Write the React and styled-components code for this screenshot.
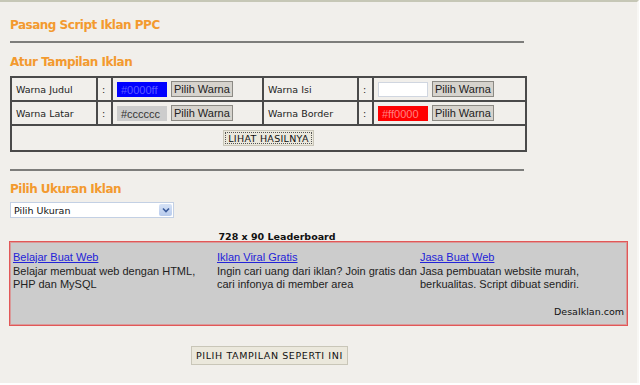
import React from 'react';
import styled, { createGlobalStyle } from 'styled-components';

const GlobalStyle = createGlobalStyle`
  body {
    margin: 0;
    background: #ffffff;
  }
`;

const Page = styled.div`
  width: 627px;
  height: 381px;
  padding: 0 0 0 10px;
  background-color: #f1efeb;
  border-top: 2px solid #c6c7b6;
  border-right: 2px solid #f8f7f4;
  font-family: "DejaVu Sans", Verdana, sans-serif;
  overflow: hidden;
`;

const Title = styled.div`
  font-family: "DejaVu Sans", Verdana, sans-serif;
  font-size: 12px;
  font-weight: bold;
  color: #f39a2f;
  letter-spacing: -0.5px;
  margin-top: 15px;
  height: 16px;
  line-height: 16px;
`;

const Heading = styled(Title)`
  margin-top: ${p => p.$top}px;
`;

const Rule = styled.div`
  width: 514px;
  height: 2px;
  background-color: #7d7d7b;
  margin-top: ${p => p.$top}px;
`;

const Table = styled.table`
  margin-top: 6px;
  width: 516px;
  border-collapse: collapse;
  border: 2px solid #3c3c3c;
  table-layout: fixed;
`;

const Cell = styled.td`
  box-sizing: border-box;
  border: 2px solid #4a4a4a;
  height: ${p => p.$h || 24}px;
  padding: 0 4px;
  font-family: "DejaVu Sans", Verdana, sans-serif;
  font-size: 9.5px;
  color: #222;
  width: ${p => p.$w}px;
  text-align: ${p => p.$center ? 'center' : 'left'};
  white-space: nowrap;
  overflow: hidden;
`;

const ColorBox = styled.span`
  display: inline-block;
  vertical-align: middle;
  width: 50px;
  height: 15px;
  line-height: 15px;
  box-sizing: border-box;
  padding-left: 3px;
  background-color: ${p => p.$bg};
  border: 1px solid ${p => p.$bg === '#ffffff' ? '#d0d6e0' : p.$bg};
  color: ${p => p.$fg};
  font-family: "Liberation Sans", Arial, sans-serif;
  font-size: 11px;
  margin-right: 4px;
`;

const ColorButton = styled.button`
  vertical-align: middle;
  height: 16px;
  padding: 0 2px;
  background-color: #d6d3cd;
  border: 1px solid #8c8a84;
  font-family: "Liberation Sans", Arial, sans-serif;
  font-size: 11px;
  color: #222;
  line-height: 13px;
`;

const PlainButton = styled.button`
  display: block;
  height: ${p => p.$h}px;
  padding: 0 4px;
  margin: ${p => p.$center ? '0 auto' : '0'};
  background-color: #ebe8dc;
  border: 1px solid #c9c6b8;
  outline: ${p => p.$dotted ? '1px dotted #555' : 'none'};
  outline-offset: -3px;
  font-family: "DejaVu Sans", Verdana, sans-serif;
  font-size: 9.5px;
  letter-spacing: ${p => p.$spacing}px;
  color: #111;
`;

const SelectWrap = styled.div`
  position: relative;
  margin-top: 5px;
  width: 164px;
  height: 16px;
`;

const Select = styled.select`
  appearance: none;
  display: block;
  width: 164px;
  height: 16px;
  box-sizing: border-box;
  border: 1px solid #c3d0e4;
  background: #ffffff;
  font-family: "DejaVu Sans", Verdana, sans-serif;
  font-size: 9.5px;
  color: #111;
  padding: 0 0 0 3px;
  outline: none;
`;

const Arrow = styled.span`
  position: absolute;
  right: 2px;
  top: 2px;
  width: 13px;
  height: 12px;
  background: linear-gradient(#d6e2f6, #b8cbed);
  border-radius: 2px;
  display: flex;
  align-items: center;
  justify-content: center;
  pointer-events: none;
`;

const SizeLabel = styled.div`
  width: 534px;
  margin-top: 14px;
  text-align: center;
  font-family: "DejaVu Sans", Verdana, sans-serif;
  font-weight: bold;
  font-size: 9.5px;
  color: #111;
  height: 9px;
  line-height: 9px;
`;

const AdBox = styled.div`
  margin-left: -1px;
  width: 611px;
  height: 79px;
  padding: 2px 3px;
  background-color: #cccccc;
  border: 1px solid #e25757;
  box-shadow: inset 0 0 0 1px #d99a9a;
  display: flex;
  flex-direction: column;
`;

const AdRow = styled.div`
  display: grid;
  grid-template-columns: 204px 203px 1fr;
  margin-top: 7px;
`;

const Ad = styled.div`
  font-family: "Liberation Sans", Arial, sans-serif;
  font-size: 11px;
  line-height: 13.5px;
  color: #222;
`;

const AdLink = styled.a`
  color: #2323d8;
  text-decoration: underline;
  display: block;
`;

const AdCredit = styled.div`
  margin-top: auto;
  text-align: right;
  font-family: "DejaVu Sans", Verdana, sans-serif;
  font-size: 9.5px;
  color: #111;
  padding-bottom: 6px;
`;

const Footer = styled.div`
  width: 516px;
  margin-top: 20px;
  padding-left: 181px;
`;

const ads = [
  { title: 'Belajar Buat Web', text: 'Belajar membuat web dengan HTML, PHP dan MySQL' },
  { title: 'Iklan Viral Gratis', text: 'Ingin cari uang dari iklan? Join gratis dan cari infonya di member area' },
  { title: 'Jasa Buat Web', text: 'Jasa pembuatan website murah, berkualitas. Script dibuat sendiri.' },
];

export default function App() {
  return (
    <Page>
      <GlobalStyle />
      <Title>Pasang Script Iklan PPC</Title>
      <Rule $top={8} />
      <Heading $top={11}>Atur Tampilan Iklan</Heading>
      <Table>
        <tbody>
          <tr>
            <Cell $w={86}>Warna Judul</Cell>
            <Cell $w={15}>:</Cell>
            <Cell $w={151}>
              <ColorBox $bg="#0000ff" $fg="#5a5aff">#0000ff</ColorBox>
              <ColorButton>Pilih Warna</ColorButton>
            </Cell>
            <Cell $w={95}>Warna Isi</Cell>
            <Cell $w={15}>:</Cell>
            <Cell $w={153}>
              <ColorBox $bg="#ffffff" $fg="#ffffff"></ColorBox>
              <ColorButton>Pilih Warna</ColorButton>
            </Cell>
          </tr>
          <tr>
            <Cell>Warna Latar</Cell>
            <Cell>:</Cell>
            <Cell>
              <ColorBox $bg="#cccccc" $fg="#333333">#cccccc</ColorBox>
              <ColorButton>Pilih Warna</ColorButton>
            </Cell>
            <Cell>Warna Border</Cell>
            <Cell>:</Cell>
            <Cell>
              <ColorBox $bg="#ff0000" $fg="#ff8080">#ff0000</ColorBox>
              <ColorButton>Pilih Warna</ColorButton>
            </Cell>
          </tr>
          <tr>
            <Cell colSpan={6} $center $h={26}>
              <PlainButton $h={16} $spacing={0.3} $dotted $center>LIHAT HASILNYA</PlainButton>
            </Cell>
          </tr>
        </tbody>
      </Table>
      <Rule $top={17} />
      <Heading $top={10}>Pilih Ukuran Iklan</Heading>
      <SelectWrap>
        <Select defaultValue="">
          <option value="">Pilih Ukuran</option>
          <option value="728x90">728 x 90 Leaderboard</option>
        </Select>
        <Arrow>
          <svg width="8" height="6" viewBox="0 0 8 6">
            <path d="M1 1.5 L4 4.5 L7 1.5" fill="none" stroke="#3a5a9a" strokeWidth="1.6" />
          </svg>
        </Arrow>
      </SelectWrap>
      <SizeLabel>728 x 90 Leaderboard</SizeLabel>
      <AdBox>
        <AdRow>
          {ads.map(ad => (
            <Ad key={ad.title}>
              <AdLink href="#">{ad.title}</AdLink>
              {ad.text}
            </Ad>
          ))}
        </AdRow>
        <AdCredit>DesaIklan.com</AdCredit>
      </AdBox>
      <Footer>
        <PlainButton $h={19} $spacing={0.6}>PILIH TAMPILAN SEPERTI INI</PlainButton>
      </Footer>
    </Page>
  );
}
